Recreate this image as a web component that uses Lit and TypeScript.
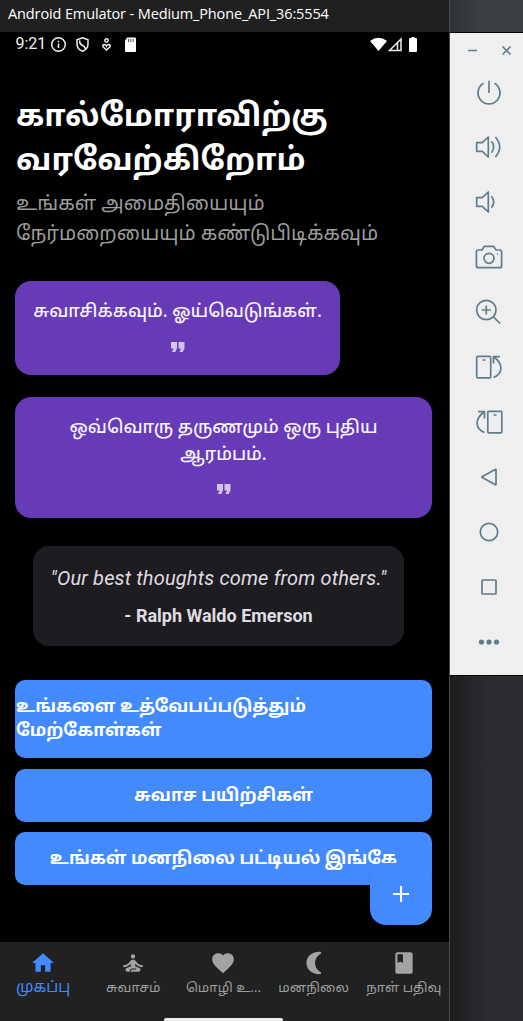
import { LitElement, html, svg, css } from "lit";

const stroke = (body: unknown) => html`<svg class="tool" viewBox="0 0 30 30">${body}</svg>`;

const tools = [
  svg`<path d="M9.6 6.3a11 11 0 1 0 10.8 0M15 3.8V16"/>`,
  svg`<path d="M2.7 10.7h5.6l6-5.7v20l-6-5.7H2.7zM17.4 9.3q4.6 5.7 0 11.4M21.4 5q8.6 10 0 20"/>`,
  svg`<path d="M2.7 10.7h5.6l6-5.7v20l-6-5.7H2.7zM17.4 9.3q4.6 5.7 0 11.4"/>`,
  svg`<path d="M4.4 8H8l2.3-3.7h9.4L22 8h3.6q2 0 2 2v13.700q0 2-2 2H4.400q-2 0-2-2V10q0-2 2-2z"/><circle cx="15" cy="16.300" r="5"/><path d="M23 12h1"/>`,
  svg`<circle cx="12.300" cy="13" r="9.700"/><path d="M19.500 20l6.700 6.500M7.800 13h9M12.300 8.500v9"/>`,
  svg`<rect x="2.700" y="4.300" width="14" height="21.500" rx="1"/><path d="M8.500 8h3M19.500 25.500c9.500-3.500 10-13.500.500-20.500M26 4.700h-6.500V11.500"/>`,
  svg`<rect x="13.800" y="4.300" width="14" height="21.500" rx="1"/><path d="M19.500 8h3M10.500 25.500c-9.500-3.500-10-13.500-.500-20.500M4 4.700h6.500V11.500"/>`,
  svg`<path d="M22 7.700v14.600q0 .7-.7.400L8.300 15.600q-.8-.6 0-1.200l13-7q.7-.3.700.300z"/>`,
  svg`<circle cx="15" cy="15" r="8.700"/>`,
  svg`<rect x="8" y="8" width="14" height="14" rx=".7"/>`,
  svg`<g class="dots"><circle cx="7.500" cy="15" r="2.600"/><circle cx="15" cy="15" r="2.600"/><circle cx="22.500" cy="15" r="2.600"/></g>`,
];

const tabs = [
  { label: "முகப்பு", on: true, icon: svg`<path d="M10 20v-6h4v6h5v-8h3L12 3 2 12h3v8z"/>` },
  {
    label: "சுவாசம்",
    icon: svg`<circle cx="12" cy="6" r="2"/><path d="M21 16v-2c-2.240 0-4.160-.960-5.600-2.680l-1.340-1.600C13.680 9.260 13.120 9 12.530 9h-1.050c-.6 0-1.150.260-1.530.720l-1.340 1.600C7.160 13.040 5.240 14 3 14v2c2.770 0 5.190-1.170 7-3.250V15l-3.880 1.550c-.670.270-1.120.930-1.120 1.660C5 19.200 5.800 20 6.790 20H9v-.5c0-1.380 1.120-2.500 2.500-2.500h3c.280 0 .5.220.5.5s-.220.5-.5.500h-3c-.830 0-1.500.670-1.500 1.500v.5h7.210c.990 0 1.790-.8 1.790-1.790 0-.730-.450-1.390-1.120-1.660L14 15v-2.250c1.810 2.080 4.230 3.250 7 3.250z"/>`,
  },
  {
    label: "மொழி உ…",
    icon: svg`<path d="M12 21.350l-1.450-1.320C5.400 15.360 2 12.280 2 8.500 2 5.420 4.420 3 7.500 3c1.740 0 3.410.810 4.500 2.090C13.090 3.810 14.760 3 16.500 3 19.580 3 22 5.420 22 8.500c0 3.780-3.400 6.860-8.550 11.540z"/>`,
  },
  { label: "மனநிலை", icon: svg`<path d="M18.500 1.800C10.500 1 5 6 5 12s5.500 11 13.500 10.200v-1.500C15.500 19 13 16 13 12s2.500-7 5.500-8.700z"/>` },
  { label: "நாள் பதிவு", icon: svg`<path d="M18 2H6c-1.100 0-2 .9-2 2v16c0 1.100.9 2 2 2h12c1.100 0 2-.9 2-2V4c0-1.100-.9-2-2-2zM6 4h5v8l-2.500-1.500L6 12z"/>` },
];

const quoteMark = html`<svg class="mark" viewBox="0 0 14 10"><path d="M0 0h6v6.200L4.300 10H1l1.500-3.500H0zM7.500 0h6v6.200L11.800 10H8.500L10 6.500H7.500z"/></svg>`;

class AppRoot extends LitElement {
  static styles = css`
    * { box-sizing: border-box; }
    :host {
      display: grid;
      grid-template-columns: 450px 73px;
      width: 523px;
      height: 1021px;
      overflow: hidden;
      background: #000;
      color: #fff;
      font-family: "Noto Sans Tamil", Roboto, sans-serif;
      white-space: nowrap;
    }
    svg { display: block; flex: none; }
    .window { display: flex; flex-direction: column; height: 1021px; min-width: 0; border-right: 1px solid #48494b; }
    .title { height: 32px; flex: none; background: #202020; padding-left: 8px; font: 14.500px/28px "Open Sans", sans-serif; letter-spacing: -0.120px; }
    .status { height: 24px; flex: none; display: flex; align-items: center; padding: 0 29px 0 15.500px; font: 16px/24px Roboto, sans-serif; }
    .status svg { fill: none; stroke: #eee; stroke-width: 1.500; }
    .status .solid { fill: #fff; stroke: none; }
    .clock { width: 34px; color: #eee; }
    .gap { flex: 1; }
    .page { flex: 1; padding: 40px 17px 0 15px; display: flex; flex-direction: column; }
    h1 { margin: 0; font-size: 31px; line-height: 44px; font-weight: 700; padding-left: 1px; }
    .sub { margin-top: 6px; font-size: 20px; line-height: 30px; color: #9c9c9c; height: 60px; padding-left: 1px; }
    .card { background: #673ab7; border-radius: 16px; text-align: center; font-size: 17.850px; font-weight: 500; line-height: 26.500px; padding-top: 19px; color: #f6f2fb; }
    .first { width: 325px; height: 94px; margin-top: 31px; }
    .second { height: 121px; margin-top: 22px; }
    .mark { width: 14px; height: 10px; margin: 15px auto 0; fill: #d1c4e9; }
    .daily { width: 371px; height: 100px; margin: 28px 0 0 18px; border-radius: 16px; background: #1d1c21; padding-top: 19px; text-align: center; color: #e0dce3; font-family: Roboto, sans-serif; }
    .saying { font-size: 20px; line-height: 26px; font-style: italic; letter-spacing: 0.160px; }
    .author { font-size: 18px; line-height: 24px; font-weight: 700; margin-top: 13px; }
    .btn { background: #448aff; border-radius: 10px; font-size: 17.600px; line-height: 24px; font-weight: 700; height: 53px; padding-top: 16px; margin-top: 10.500px; text-align: center; }
    .tall { height: 78px; margin-top: 34px; text-align: left; padding-left: 1px; }
    .anchor { position: relative; }
    .fab { position: absolute; right: 0; top: 31px; width: 62px; height: 62px; border-radius: 16px; background: #448aff; display: grid; place-items: center; box-shadow: 0 2px 5px rgba(0, 0, 0, .13); }
    .fab svg { width: 16px; height: 16px; stroke: #fff; stroke-width: 2; }
    nav { height: 79px; flex: none; background: #212121; position: relative; display: grid; grid-template-columns: repeat(5, 90.200px); padding-top: 8px; color: #9e9e9e; font-size: 13.300px; }
    .tab { display: flex; flex-direction: column; align-items: center; margin-left: -4px; }
    .tab svg { width: 26px; height: 26px; fill: #a3a3a3; }
    .tab span { line-height: 25px; }
    .on { color: #448aff; font-size: 15.400px; }
    .tab.on svg { fill: #448aff; }
    .pill { position: absolute; left: 164px; bottom: 0; width: 119px; height: 3px; background: #eee; border-radius: 2px 2px 0 0; }
    .side { display: flex; flex-direction: column; }
    .top { height: 32px; background: linear-gradient(90deg, #303234, #3c4043 45%); }
    .panel { height: 642px; margin: 1px 0; background: #efefef; padding: 9px 0 0; display: flex; flex-direction: column; align-items: center; color: #5b7c8b; }
    .panel svg { fill: none; stroke: #607d8b; stroke-width: 1.700; stroke-linejoin: round; }
    .wm { width: 73px; height: 18px; }
    .tools { display: grid; grid-auto-rows: 55px; margin: 4.500px 0 0 5px; }
    .tool { width: 30px; height: 30px; align-self: center; }
    .panel .dots { fill: #607d8b; stroke: none; }
    .below { flex: 1; background: linear-gradient(90deg, #1b1c1d, #242528 25%, #2b2c30 60%); }
  `;

  render() {
    return html`
      <div class="window">
        <div class="title">Android Emulator - Medium_Phone_API_36:5554</div>
        <div class="status">
          <span class="clock">9:21</span>
          <svg width="17" height="17" viewBox="0 0 17 17"><circle cx="8.500" cy="8.500" r="6.800"/><path d="M8.500 7.500V12M8.500 4.700v1.500"/></svg>
          <svg width="31" height="17" viewBox="0 0 31 17"><path d="M15.500 1.700l5.500 2v4.300q0 5-5.500 7.300Q10 13 10 8V3.700zM12.500 4.500q0 3.500 3 5 2.500 1.300 3 3.500"/></svg>
          <svg width="17" height="17" viewBox="0 0 17 17"><circle cx="8.500" cy="4.500" r="1.700"/><path d="M8.500 14L5 10.700q-1-2.200 1.500-2.200 1.500.300 2 1.500.500-1.200 2-1.500Q13 8.500 12 10.700z"/></svg>
          <svg class="solid" width="26" height="17" viewBox="2 0 26 17"><path d="M14 1.500h8q1 0 1 1V15q0 1-1 1h-9q-1 0-1-1V5z"/><path d="M15 3h1v3h-1zM17.300 3h1v3h-1zM19.600 3h1v3h-1z" fill="#555"/></svg>
          <span class="gap"></span>
          <svg class="solid" width="17" height="15" viewBox="0 0 17 15"><path d="M0 4Q8.500-2.500 17 4L8.500 14z"/></svg>
          <svg width="16" height="15" viewBox="0 0 16 15"><path d="M2.500 13.500L14 2v11.500zM10.500 6v7"/></svg>
          <svg class="solid" width="17" height="17" viewBox="0 0 17 17"><path d="M7 2h1.500V1h3v1H13q1 0 1 1v12q0 1-1 1H7q-1 0-1-1V3q0-1 1-1z"/></svg>
        </div>
        <div class="page">
          <h1>கால்மோராவிற்கு<br />வரவேற்கிறோம்</h1>
          <div class="sub">உங்கள் அமைதியையும்<br />நேர்மறையையும் கண்டுபிடிக்கவும்</div>
          <div class="card first">சுவாசிக்கவும். ஓய்வெடுங்கள்.${quoteMark}</div>
          <div class="card second">ஒவ்வொரு தருணமும் ஒரு புதிய<br />ஆரம்பம்.${quoteMark}</div>
          <div class="daily">
            <div class="saying">"Our best thoughts come from others."</div>
            <div class="author">- Ralph Waldo Emerson</div>
          </div>
          <div class="btn tall">உங்களை உத்வேபப்படுத்தும்<br />மேற்கோள்கள்</div>
          <div class="btn">சுவாச பயிற்சிகள்</div>
          <div class="btn anchor">உங்கள் மனநிலை பட்டியல் இங்கே
            <div class="fab"><svg viewBox="0 0 16 16"><path d="M8 0v16M0 8h16"/></svg></div>
          </div>
        </div>
        <nav>
          ${tabs.map((t) => html`<div class="tab ${t.on ? "on" : ""}"><svg viewBox="0 0 24 24">${t.icon}</svg><span>${t.label}</span></div>`)}
          <div class="pill"></div>
        </nav>
      </div>
      <div class="side">
        <div class="top"></div>
        <div class="panel">
          <svg class="wm" viewBox="0 0 73 18"><path d="M18 8.500h9M52.500 4.500l8 8M60.500 4.500l-8 8"/></svg>
          <div class="tools">${tools.map(stroke)}</div>
        </div>
        <div class="below"></div>
      </div>
    `;
  }
}
customElements.define("app-root", AppRoot);
